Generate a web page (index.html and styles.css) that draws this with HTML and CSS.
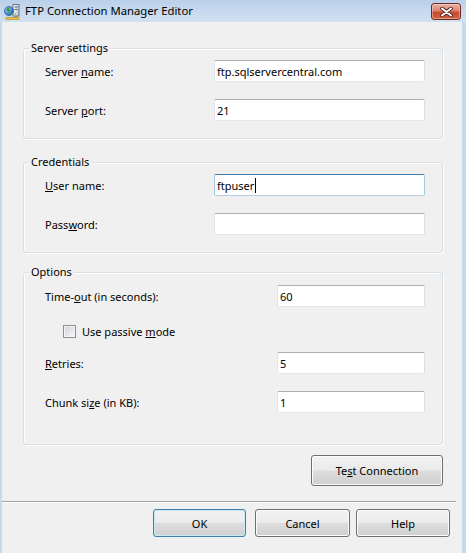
FILE: index.html
```html
<!DOCTYPE html>
<html>
<head>
<meta charset="utf-8">
<title>FTP Connection Manager Editor</title>
<link rel="stylesheet" href="styles.css">
</head>
<body>
<div class="window">
  <div class="titlebar">
    <svg class="app-icon" width="16" height="16" viewBox="0 0 16 16">
      <defs>
        <radialGradient id="gl" cx="0.35" cy="0.35" r="0.7">
          <stop offset="0" stop-color="#9fd0ff"/>
          <stop offset="1" stop-color="#1f5fb8"/>
        </radialGradient>
        <linearGradient id="sv" x1="0" y1="0" x2="1" y2="0">
          <stop offset="0" stop-color="#ffffff"/>
          <stop offset="1" stop-color="#b9bec6"/>
        </linearGradient>
      </defs>
      <rect x="9" y="0.5" width="6" height="11.5" fill="url(#sv)" stroke="#6f7680"/>
      <rect x="10.5" y="2.5" width="3" height="1" fill="#5b6470"/>
      <rect x="10.5" y="5" width="3" height="1" fill="#5b6470"/>
      <rect x="10.5" y="9.5" width="1.5" height="1" fill="#3fa83f"/>
      <circle cx="5" cy="7" r="4.6" fill="url(#gl)" stroke="#1d4f93" stroke-width="0.6"/>
      <path d="M2.2 5.2 Q3.5 3.2 5.6 3.6 L5 5.4 L6.6 6.6 L5.4 8.2 L3.6 7.4 Z" fill="#3e9a3a"/>
      <path d="M6 9.2 L8.2 8.2 L8.6 9.6 L6.8 11 Z" fill="#3e9a3a"/>
      <rect x="11.5" y="12" width="1" height="2" fill="#6f5d20"/>
      <rect x="2" y="13.5" width="13" height="2" fill="#f0c846" stroke="#a8851f" stroke-width="0.6"/>
    </svg>
    <span class="title">FTP Connection Manager Editor</span>
    <div class="close">
      <svg width="13" height="10" viewBox="0 0 13 10">
        <path d="M2 1.5 L11 8.5 M11 1.5 L2 8.5" stroke="#47231d" stroke-width="3.6" stroke-linecap="round"/>
        <path d="M2 1.5 L11 8.5 M11 1.5 L2 8.5" stroke="#ffffff" stroke-width="2" stroke-linecap="round"/>
      </svg>
    </div>
  </div>
  <div class="frame">
    <div class="client">
      <div class="group g-server">
        <span class="legend">Server settings</span>
        <div class="row"><span class="label">Server <u>n</u>ame:</span><div class="field">ftp.sqlservercentral.com</div></div>
        <div class="row"><span class="label">Server <u>p</u>ort:</span><div class="field">21</div></div>
      </div>
      <div class="group g-cred">
        <span class="legend">Credentials</span>
        <div class="row"><span class="label"><u>U</u>ser name:</span><div class="field focus">ftpuser<span class="caret"></span></div></div>
        <div class="row"><span class="label">Pass<u>w</u>ord:</span><div class="field"></div></div>
      </div>
      <div class="group g-options">
        <span class="legend">Options</span>
        <div class="row opt-row"><span class="label">Time-<u>o</u>ut (in seconds):</span><div class="field">60</div></div>
        <div class="check-row"><span class="checkbox"></span><span class="check-label">Use passive <u>m</u>ode</span></div>
        <div class="row opt-row retries"><span class="label"><u>R</u>etries:</span><div class="field">5</div></div>
        <div class="row opt-row"><span class="label">Chunk si<u>z</u>e (in KB):</span><div class="field">1</div></div>
      </div>
      <div class="test-row"><button class="btn btn-test">Te<u>s</u>t Connection</button></div>
      <div class="separator"></div>
      <div class="actions">
        <button class="btn btn-ok default">OK</button>
        <button class="btn btn-cancel">Cancel</button>
        <button class="btn btn-help">Help</button>
      </div>
    </div>
  </div>
</div>
</body>
</html>
```

FILE: styles.css
```css
* { box-sizing: border-box; }
html, body { margin: 0; padding: 0; }
body {
  font-family: "Noto Sans", "DejaVu Sans", sans-serif;
  font-size: 11px;
  color: #000;
  background: #f0f0f0;
}
u { text-decoration: underline; text-underline-offset: 1px; }

.window {
  width: 466px;
  height: 553px;
  display: flex;
  flex-direction: column;
  background: #c3d6ec;
}

.titlebar {
  height: 22px;
  flex: none;
  display: flex;
  align-items: center;
  padding-left: 4px;
  background: linear-gradient(#bad0e9, #c9dbef 60%, #d2e1f1);
}
.app-icon { flex: none; margin-top: 1px; }
.title {
  flex: 1;
  margin-left: 5px;
  font-size: 11.3px;
  line-height: 16px;
}
.close {
  align-self: flex-start;
  margin-top: 3px;
  margin-right: 5px;
  width: 30px;
  height: 17px;
  border: 1px solid #6b2d23;
  border-radius: 3px;
  background: linear-gradient(#eab0a3, #dc8571 45%, #c84a31 55%, #d4613f);
  box-shadow: inset 0 0 0 1px rgba(255,255,255,0.35);
  display: flex;
  align-items: center;
  justify-content: center;
}

.frame {
  flex: 1;
  display: flex;
  padding: 0 4px 0 2px;
  background: #c6d8ec;
}
.client {
  flex: 1;
  display: flex;
  flex-direction: column;
  background: #f0f0f0;
}

.group {
  margin: 0 19px 0 21px;
  border: 1px solid #d5dfe5;
  border-radius: 3px;
  box-shadow: inset 1px 1px 0 #ffffff, 1px 1px 0 #ffffff;
  padding: 0 17px 17px 21px;
}
.g-server { margin-top: 26px; }
.g-cred { margin-top: 23px; }
.g-options { margin-top: 19px; padding-bottom: 31px; }

.legend {
  display: block;
  width: max-content;
  height: 16px;
  line-height: 16px;
  margin: -9px 0 4px -16px;
  padding: 0 2px;
  background: #f0f0f0;
}
.g-options .legend { margin-bottom: 5px; }

.row {
  display: grid;
  grid-template-columns: 169px 211px;
  align-items: center;
  height: 22px;
}
.row + .row { margin-top: 17px; }
.opt-row { grid-template-columns: 232px 148px; }
.row.retries { margin-top: 13px; }

.field {
  height: 22px;
  background: #fff;
  border: 1px solid;
  border-color: #abadb3 #dbdfe6 #e3e9ef #e2e3ea;
  border-radius: 2px;
  padding: 0 2px;
  display: flex;
  align-items: center;
  white-space: nowrap;
}
.field.focus { border-color: #3d7bad #a4c9e3 #b5cfe7 #a4c9e3; }
.caret {
  display: inline-block;
  width: 1px;
  height: 15px;
  margin-left: 1px;
  background: #000;
}

.check-row {
  display: flex;
  align-items: center;
  height: 15px;
  margin-top: 17px;
  padding-left: 18px;
}
.checkbox {
  width: 13px;
  height: 13px;
  flex: none;
  border: 1px solid #8e8f8f;
  background: linear-gradient(135deg, #cdd1d6, #eceef0 70%, #f7f7f7);
  box-shadow: inset 0 0 0 1px #f4f4f4;
}
.check-label { margin-left: 6px; }

.test-row {
  display: flex;
  justify-content: flex-end;
  margin: 10px 19px 0 0;
}

.btn {
  font: inherit;
  color: #000;
  padding: 0;
  height: 28px;
  border: 1px solid #707070;
  border-radius: 3px;
  background: linear-gradient(#f2f2f2, #ebebeb 48%, #dddddd 52%, #cfcfcf);
  box-shadow: inset 0 0 0 1px #fcfcfc;
}
.btn.default {
  border-color: #3c7fb1;
  box-shadow: inset 0 0 0 1px #c8e8f8;
}
.btn-test { width: 132px; height: 31px; }

.separator {
  height: 2px;
  margin: 15px 6px 0 0;
  border-top: 1px solid #a0a0a0;
  border-bottom: 1px solid #ffffff;
}

.actions {
  display: flex;
  justify-content: flex-end;
  margin: 6px 12px 0 0;
}
.btn-ok { width: 93px; margin-right: 9px; }
.btn-cancel { width: 95px; margin-right: 6px; }
.btn-help { width: 94px; }
```
